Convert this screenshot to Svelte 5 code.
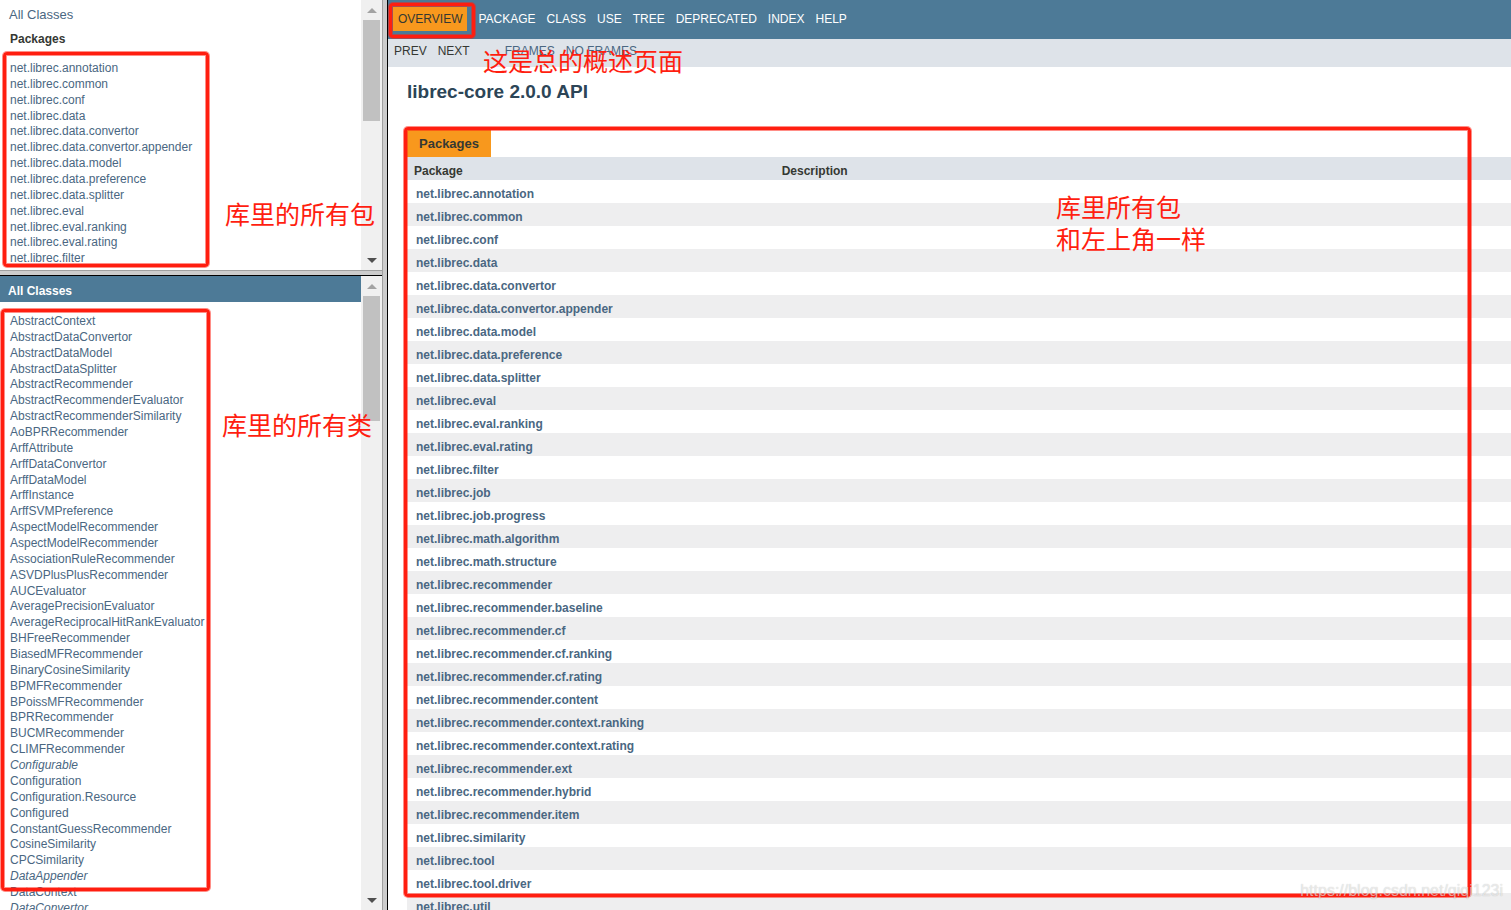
<script lang="ts">
    const packages = [
        'annotation', 'common', 'conf', 'data', 'data.convertor',
        'data.convertor.appender', 'data.model', 'data.preference',
        'data.splitter', 'eval', 'eval.ranking', 'eval.rating', 'filter',
        'job', 'job.progress', 'math.algorithm', 'math.structure',
        'recommender', 'recommender.baseline', 'recommender.cf',
        'recommender.cf.ranking', 'recommender.cf.rating',
        'recommender.content', 'recommender.context.ranking',
        'recommender.context.rating', 'recommender.ext',
        'recommender.hybrid', 'recommender.item', 'similarity', 'tool',
        'tool.driver', 'util'
    ].map((name) => 'net.librec.' + name)

    const classes = [
        'AbstractContext', 'AbstractDataConvertor', 'AbstractDataModel',
        'AbstractDataSplitter', 'AbstractRecommender',
        'AbstractRecommenderEvaluator', 'AbstractRecommenderSimilarity',
        'AoBPRRecommender', 'ArffAttribute', 'ArffDataConvertor',
        'ArffDataModel', 'ArffInstance', 'ArffSVMPreference',
        'AspectModelRecommender', 'AspectModelRecommender',
        'AssociationRuleRecommender', 'ASVDPlusPlusRecommender',
        'AUCEvaluator', 'AveragePrecisionEvaluator',
        'AverageReciprocalHitRankEvaluator', 'BHFreeRecommender',
        'BiasedMFRecommender', 'BinaryCosineSimilarity', 'BPMFRecommender',
        'BPoissMFRecommender', 'BPRRecommender', 'BUCMRecommender',
        'CLIMFRecommender', 'Configurable', 'Configuration',
        'Configuration.Resource', 'Configured', 'ConstantGuessRecommender',
        'CosineSimilarity', 'CPCSimilarity', 'DataAppender', 'DataContext',
        'DataConvertor'
    ]
    const interfaces = ['Configurable', 'DataAppender', 'DataConvertor']

    const navItems = ['PACKAGE', 'CLASS', 'USE', 'TREE', 'DEPRECATED', 'INDEX', 'HELP']
</script>

{#snippet scrollbar(thumb: number)}
    <div class="scrollbar">
        <button aria-label="Scroll up">
            <svg width="10" height="5" viewBox="0 0 10 5"><path d="M0 5L5 0L10 5Z" fill="#a3a3a3" /></svg>
        </button>
        <div class="track"><div class="thumb" style="height: {thumb}%"></div></div>
        <button aria-label="Scroll down">
            <svg width="10" height="5" viewBox="0 0 10 5"><path d="M0 0L5 5L10 0Z" fill="#505050" /></svg>
        </button>
    </div>
{/snippet}

<div class="frames">
    <div class="left">
        <section class="frame package-list">
            <div class="content">
                <a class="all" href="#all">All Classes</a>
                <h2>Packages</h2>
                <ul>
                    {#each packages as name}
                        <li><a href="#{name}">{name}</a></li>
                    {/each}
                </ul>
            </div>
            {@render scrollbar(44)}
            <div class="mark mark-packages"></div>
            <p class="note note-packages">库里的所有包</p>
        </section>
        <div class="split-row"></div>
        <section class="frame class-list">
            <div class="content">
                <h1>All Classes</h1>
                <ul>
                    {#each classes as name}
                        <li>
                            <a href="#{name}" class:interface={interfaces.includes(name)}>{name}</a>
                        </li>
                    {/each}
                </ul>
            </div>
            {@render scrollbar(21)}
            <div class="mark mark-classes"></div>
            <p class="note note-classes">库里的所有类</p>
        </section>
    </div>
    <div class="split-col"></div>
    <main>
        <nav class="top-nav">
            <span class="current">OVERVIEW<span class="mark mark-overview"></span></span>
            {#each navItems as item}
                <a href="#{item}">{item}</a>
            {/each}
        </nav>
        <div class="sub-nav">
            <span>PREV</span>
            <span>NEXT</span>
            <a class="first" href="#frames">FRAMES</a>
            <a href="#noframes">NO FRAMES</a>
        </div>
        <h1 class="title">librec-core 2.0.0 API</h1>
        <table>
            <caption><span>Packages</span></caption>
            <thead>
                <tr><th class="name">Package</th><th>Description</th></tr>
            </thead>
            <tbody>
                {#each packages as name}
                    <tr><td><a href="#{name}">{name}</a></td><td></td></tr>
                {/each}
            </tbody>
        </table>
        <div class="mark mark-table"></div>
        <p class="note note-overview">这是总的概述页面</p>
        <p class="note note-table">库里所有包<br />和左上角一样</p>
        <span class="watermark">https://blog.csdn.net/qiqi123i</span>
    </main>
</div>

<style>
    :global(body) {
        margin: 0;
        background: #fff;
    }

    .frames {
        display: grid;
        grid-template-columns: 382px 6px minmax(0, 1fr);
        height: 100vh;
        overflow: hidden;
        color: #353833;
        font-family: 'Liberation Sans', Arial, sans-serif;
        font-size: 12px;
    }

    a {
        color: #4a6782;
        text-decoration: none;
    }

    ul {
        margin: 0;
        padding: 0 0 0 10px;
        list-style: none;
        line-height: 1.322;
    }

    .left {
        display: grid;
        grid-template-rows: 270px 6px minmax(0, 1fr);
        min-height: 0;
    }

    .split-row,
    .split-col {
        box-sizing: border-box;
        background: #ccc;
    }

    .split-row {
        border-top: 1px solid #a0a0a0;
        border-bottom: 1px solid #000;
    }

    .split-col {
        border-left: 1px solid #a0a0a0;
        border-right: 1px solid #000;
    }

    .frame {
        position: relative;
        display: flex;
        min-height: 0;
    }

    .content {
        flex: 1;
        overflow: hidden;
    }

    .package-list .content {
        margin-bottom: 4px;
    }

    .all {
        display: block;
        padding: 7px 0 0 9px;
        font-size: 13px;
        line-height: 16px;
    }

    .package-list h2 {
        margin: 8px 0 14px;
        padding-left: 10px;
        font-size: 12px;
        line-height: 16px;
    }

    .class-list h1 {
        margin: 0 0 12px;
        padding: 7px 8px 3px;
        background: #4d7a97;
        color: #fff;
        font-size: 12px;
        line-height: 16px;
    }

    .interface {
        font-style: italic;
    }

    .scrollbar {
        display: flex;
        flex-direction: column;
        width: 21px;
        background: #f0f0f0;
    }

    .scrollbar button {
        display: flex;
        align-items: center;
        justify-content: center;
        height: 20px;
        padding: 0;
        border: 0;
        background: none;
    }

    .track {
        flex: 1;
        padding: 0 2px;
    }

    .thumb {
        background: #c1c1c1;
    }

    main {
        position: relative;
        min-width: 0;
        overflow: hidden;
    }

    .top-nav,
    .sub-nav {
        display: flex;
        align-items: center;
        gap: 11px;
    }

    .top-nav {
        box-sizing: border-box;
        height: 39px;
        padding: 0 0 2px 5px;
        background: #4d7a97;
    }

    .top-nav a {
        color: #fff;
    }

    .current {
        position: relative;
        padding: 0 5px;
        background: #f8981d;
        line-height: 24px;
    }

    .sub-nav {
        height: 28px;
        padding-left: 6px;
        background: #dee3e9;
        line-height: 16px;
    }

    .sub-nav > * {
        padding-bottom: 4px;
    }

    .sub-nav .first {
        margin-left: 24px;
    }

    .title {
        margin: 13px 0 26px;
        padding-left: 19px;
        color: #2c4557;
        font-size: 19px;
        line-height: 24px;
    }

    table {
        width: calc(100% - 19px);
        margin-left: 19px;
        border-spacing: 0;
        table-layout: fixed;
    }

    caption {
        text-align: left;
    }

    caption span {
        display: block;
        width: max-content;
        padding: 0 12px;
        background: #f8981d;
        font-size: 13px;
        font-weight: bold;
        line-height: 27px;
    }

    th,
    td {
        padding: 7px 7px 1px;
        font-weight: bold;
        line-height: 15px;
        text-align: left;
    }

    td {
        padding-left: 9px;
    }

    th {
        background: #dee3e9;
    }

    .name {
        width: 33.3%;
        box-sizing: border-box;
    }

    tbody tr:nth-child(even) {
        background: #eeeeef;
    }

    /* red pen marks over the frames */
    .mark {
        position: absolute;
        border: 3px solid #ff1e10;
        border-radius: 4px;
        box-shadow: 0 0 0 1px rgba(255, 30, 16, 0.5), inset 0 0 0 1px rgba(255, 30, 16, 0.5);
        pointer-events: none;
    }

    .mark-packages {
        inset: 52px 173px 3px 3px;
    }

    .mark-classes {
        inset: 33px 172px 19px 1px;
    }

    .mark-overview {
        inset: -4px -8px -7px -4px;
    }

    .mark-table {
        inset: 127px 40px 13px 16px;
    }

    .note {
        position: absolute;
        margin: 0;
        color: #ff1e10;
        font-family: 'Noto Sans CJK SC', sans-serif;
        font-size: 25px;
        font-weight: 400;
        line-height: 32px;
        white-space: nowrap;
    }

    .note-packages {
        top: 197px;
        left: 225px;
    }

    .note-classes {
        top: 132px;
        left: 222px;
    }

    .note-overview {
        top: 44px;
        left: 95px;
    }

    .note-table {
        top: 190px;
        left: 668px;
    }

    .watermark {
        position: absolute;
        right: 8px;
        bottom: 10px;
        color: rgba(255, 255, 255, 0.6);
        font-size: 16px;
        line-height: 18px;
        text-shadow: 0 0 1px rgba(0, 0, 0, 0.25);
    }
</style>
